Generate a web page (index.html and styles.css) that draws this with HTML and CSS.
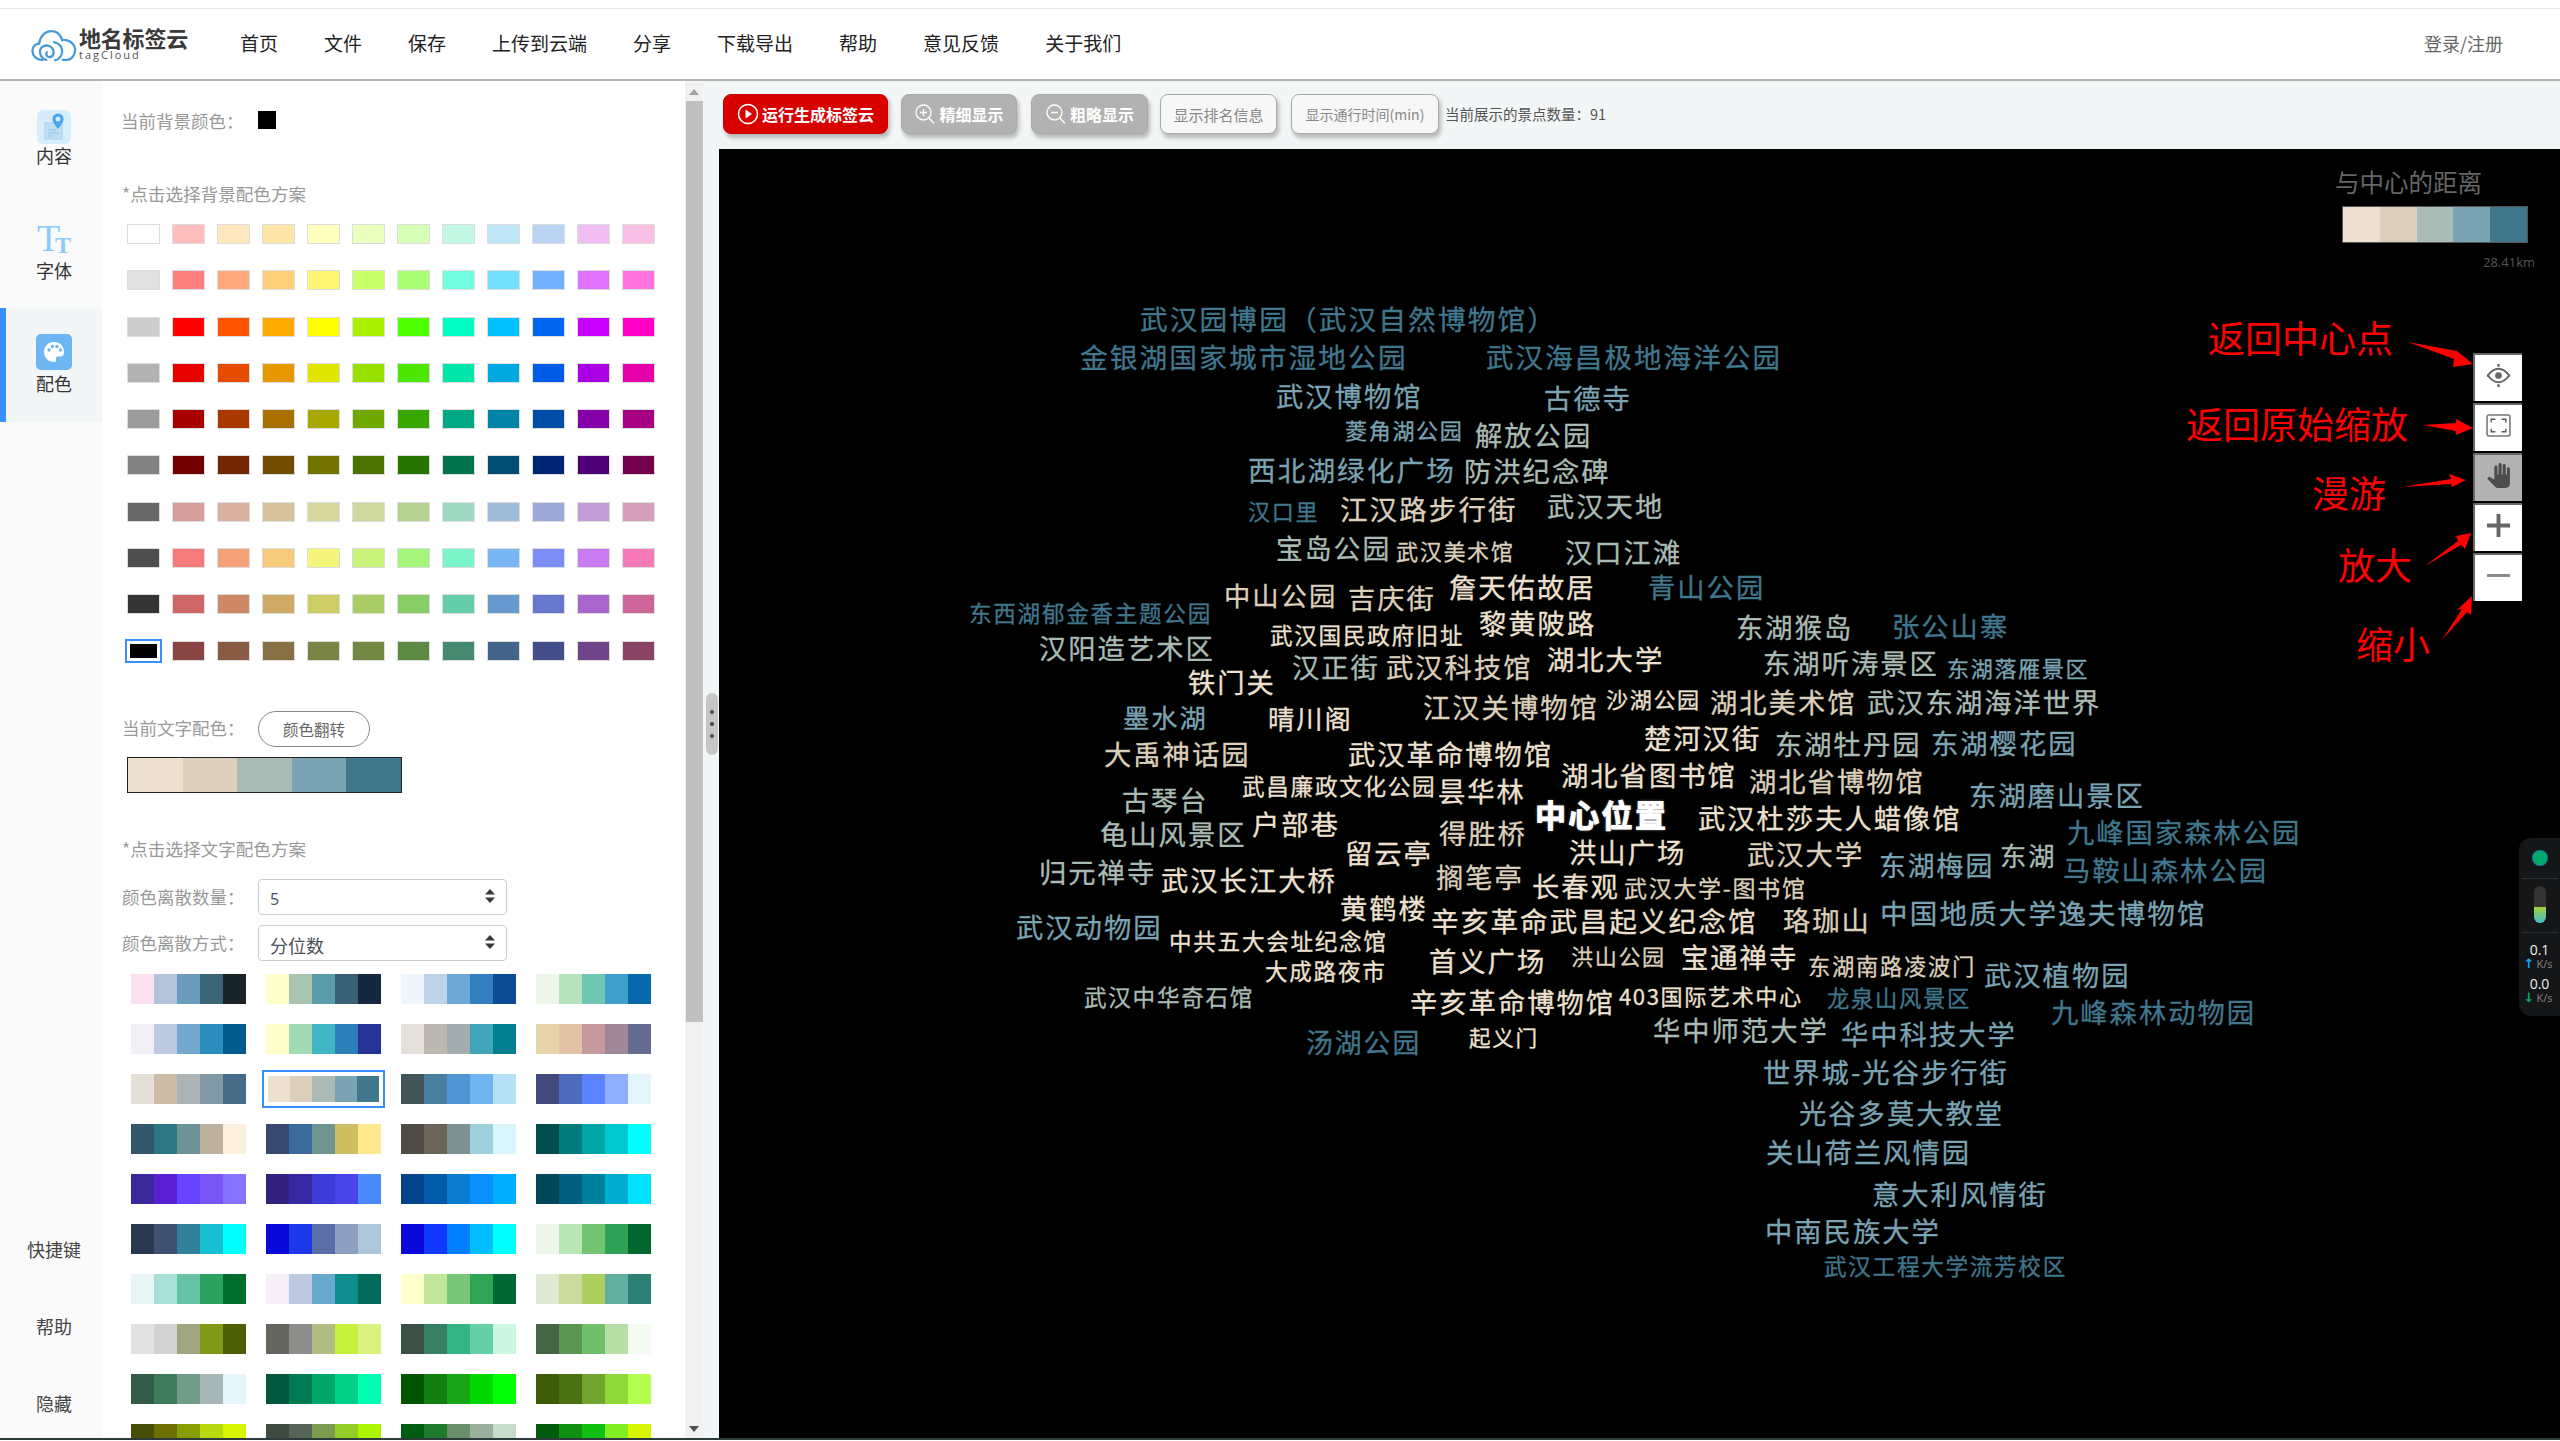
FILE: index.html
```html
<!DOCTYPE html>
<html lang="zh-CN">
<head>
  <meta charset="UTF-8" />
  <title>地名标签云 tagCloud</title>
  <link rel="stylesheet" href="styles.css">
</head>
<body>

<div class="topstrip"></div>

<header class="header">
  <div class="logo">
    <svg class="logo-icon" viewBox="0 0 48 34" fill="none" stroke="#4a9ad6" stroke-width="2.400" stroke-linecap="round">
      <path d="M12 32C5 32 1.500 27 1.500 22.500C1.500 18 5 15 8.500 15C9.500 7 15 2 21 2C27 2 31 6 32.500 11.500C38 10 45 14 46 20.500C46.500 26 43 32 37 32H33"/>
      <path d="M16 32C11 31 8.500 26 9.500 22C10.500 18 15 16 19 17.500C25 20 25 28 20 29C17 29.500 15 26 16.500 24"/>
      <path d="M24 13.500C30 14.500 33 19 32.500 24C32 28 29 32 25 32.500"/>
    </svg>
    <div class="logo-text">
      <div class="logo-name">地名标签云</div>
      <div class="logo-sub">tagCloud</div>
    </div>
  </div>
  <nav class="nav">
    <a>首页</a><a>文件</a><a>保存</a><a>上传到云端</a><a>分享</a><a>下载导出</a><a>帮助</a><a>意见反馈</a><a>关于我们</a>
  </nav>
  <div class="login">登录/注册</div>
</header>

<div class="main">
  <aside class="sidebar">
    <div class="side-item side-first">
      <svg class="side-icon" viewBox="0 0 34 34">
        <rect width="34" height="34" rx="6" fill="#d6eefb"/>
        <rect x="8" y="13" width="17" height="16" fill="#bfe0f5" stroke="#9fd0ee"/>
        <path d="M11 20h8M11 23h11M11 26h6" stroke="#8fc6ea" stroke-width="1"/>
        <path d="M21 19C17 14 15.500 11.500 15.500 9A5.500 5.500 0 0 1 26.500 9C26.500 11.500 25 14 21 19Z" fill="#4aa3f0"/>
        <circle cx="21" cy="9" r="2.500" fill="#d6eefb"/>
      </svg>
      <span>内容</span>
    </div>
    <div class="side-item side-font">
      <div class="tt"><span class="tt-big">T</span><span class="tt-small">T</span></div>
      <span>字体</span>
    </div>
    <div class="side-item side-active">
      <svg class="side-icon" viewBox="0 0 36 36">
        <rect width="36" height="36" rx="5" fill="#6cb6f3"/>
        <path d="M18 8C11.500 8 8 13 8 18C8 24 13 28 18 28C20 28 20.500 26.500 20 25.200C19.500 23.500 20.500 22.500 22 22.500H24.500C27 22.500 28 20.500 28 18C28 12 24 8 18 8Z" fill="#fff"/>
        <circle cx="13" cy="16" r="1.700" fill="#6cb6f3"/>
        <circle cx="16.500" cy="12.500" r="1.700" fill="#6cb6f3"/>
        <circle cx="21" cy="12.500" r="1.700" fill="#6cb6f3"/>
        <circle cx="24.500" cy="16" r="1.700" fill="#6cb6f3"/>
      </svg>
      <span>配色</span>
    </div>
    <div class="side-bottom">
      <div class="side-link">快捷键</div>
      <div class="side-link">帮助</div>
      <div class="side-link">隐藏</div>
    </div>
  </aside>

  <section class="panel">
    <div class="row-bg">
      <span class="label">当前背景颜色：</span>
      <span class="bg-current"></span>
    </div>
    <div class="title title-bg">*点击选择背景配色方案</div>
    <div class="swatches" id="swatches"></div>

    <div class="row-text">
      <span class="label label-fixed label-up">当前文字配色：</span>
      <button class="flip">颜色翻转</button>
    </div>
    <div class="strip current-strip" id="currentStrip"></div>

    <div class="title title-text">*点击选择文字配色方案</div>
    <div class="row-select">
      <span class="label label-fixed">颜色离散数量：</span>
      <div class="select select-num">5
        <svg class="select-arrow" viewBox="0 0 10 14"><path d="M5 0L10 5.500H0ZM5 14L0 8.500H10Z" fill="#343a40"/></svg>
      </div>
    </div>
    <div class="row-select row-select2">
      <span class="label label-fixed">颜色离散方式：</span>
      <div class="select">分位数
        <svg class="select-arrow" viewBox="0 0 10 14"><path d="M5 0L10 5.500H0ZM5 14L0 8.500H10Z" fill="#343a40"/></svg>
      </div>
    </div>
    <div class="palettes" id="palettes"></div>
  </section>

  <div class="vbar">
    <div class="vbar-up"></div>
    <div class="vbar-thumb"></div>
    <div class="vbar-down"></div>
  </div>

  <section class="work">
    <div class="toolbar">
      <button class="btn btn-run">
        <svg class="btn-icon" viewBox="0 0 22 22" fill="none" stroke="#fff" stroke-width="1.600"><circle cx="11" cy="11" r="9.500"/><path d="M8.500 6.500L15 11L8.500 15.500Z" fill="#fff" stroke="none"/></svg>
        运行生成标签云
      </button>
      <button class="btn btn-gray btn-fine">
        <svg class="btn-icon" viewBox="0 0 22 22" fill="none" stroke="#fff" stroke-width="1.300"><circle cx="9.500" cy="9.500" r="7.500"/><path d="M15 15L20 20.500M6 9.500H13M9.500 6V13"/></svg>
        精细显示
      </button>
      <button class="btn btn-gray btn-coarse">
        <svg class="btn-icon" viewBox="0 0 22 22" fill="none" stroke="#fff" stroke-width="1.300"><circle cx="9.500" cy="9.500" r="7.500"/><path d="M15 15L20 20.500M6 9.500H13"/></svg>
        粗略显示
      </button>
      <button class="btn btn-line btn-rank">显示排名信息</button>
      <button class="btn btn-line btn-time">显示通行时间(min)</button>
      <span class="count">当前展示的景点数量：91</span>
    </div>

    <div class="stage">
      <div class="split">
        <div class="split-handle"><i></i><i></i><i></i></div>
      </div>

      <div class="canvas" id="canvas">
        <div class="legend">
          <div class="legend-title">与中心的距离</div>
          <div class="strip legend-strip" id="legendStrip"></div>
          <div class="legend-km">28.41km</div>
        </div>

        <span class="note note-center">返回中心点</span>
        <span class="note note-reset">返回原始缩放</span>
        <span class="note note-pan">漫游</span>
        <span class="note note-in">放大</span>
        <span class="note note-out">缩小</span>

        <svg class="arrows" viewBox="719 149 1841 1289">
          <polygon points="2408,342 2457,351 2473,364 2453,367 2454,359"/>
          <polygon points="2423,425 2456,423 2456,419 2473,428 2456,435 2456,431"/>
          <polygon points="2402,487 2451,479 2449,474 2466,480 2452,487 2451,484"/>
          <polygon points="2425,566 2458,541 2456,536 2471,533 2465,549 2461,545"/>
          <polygon points="2442,640 2462,609 2457,610 2472,596 2471,615 2467,612"/>
        </svg>

        <div class="zoomctl">
          <div class="zoombtn">
            <svg viewBox="0 0 26 26" fill="none" stroke="#666"><path d="M2 13C6 7.500 9 6 13 6C17 6 20 7.500 24 13C20 18.500 17 20 13 20C9 20 6 18.500 2 13Z" stroke-width="2"/><circle cx="13" cy="13" r="3.500" fill="#666" stroke="none"/><path d="M13 1V4M13 22V25M1 13H3M23 13H25" stroke-width="2.500"/></svg>
          </div>
          <div class="zoombtn">
            <svg viewBox="0 0 24 22" fill="none" stroke="#777"><rect x="1" y="1" width="22" height="20" rx="2" stroke-width="1.500"/><path d="M5 8V5H9M15 5H19V8M5 14V17H9M15 17H19V14" stroke="#555" stroke-width="1.300"/></svg>
          </div>
          <div class="zoombtn zoombtn-on">
            <svg viewBox="0 0 24 24"><path d="M23 5.500V20c0 2.200-1.800 4-4 4h-7.300c-1.080 0-2.100-.43-2.850-1.190L1 14.830s1.260-1.230 1.300-1.250c.22-.19.490-.29.790-.29.220 0 .420.060.600.160.040.010 4.310 2.460 4.310 2.460V4c0-.83.670-1.500 1.500-1.500S11 3.170 11 4v7h1V1.500c0-.83.670-1.500 1.500-1.500S15 .67 15 1.500V11h1V2.500c0-.83.670-1.500 1.500-1.500s1.500.67 1.500 1.500V11h1V5.500c0-.83.670-1.500 1.500-1.500s1.500.67 1.500 1.500z" fill="#4d4d4d"/></svg>
          </div>
          <div class="zoombtn">
            <svg viewBox="0 0 26 26" stroke="#666" stroke-width="4"><path d="M1 13H25M13 1V25"/></svg>
          </div>
          <div class="zoombtn">
            <svg viewBox="0 0 26 26" stroke="#888" stroke-width="3"><path d="M1 13H25"/></svg>
          </div>
        </div>

        <div class="netwidget">
          <div class="net-dot"></div>
          <div class="net-line"></div>
          <div class="net-pill"><div class="net-fill"></div></div>
          <div class="net-line"></div>
          <div class="net-num">0.1</div>
          <div class="net-unit"><i class="up">↑</i>K/s</div>
          <div class="net-num net-num2">0.0</div>
          <div class="net-unit"><i class="down">↓</i>K/s</div>
        </div>
      </div>
    </div>
  </section>
</div>

<div class="endline"></div>

<script src="app.js"></script>
</body>
</html>
```

FILE: styles.css
```css
* {
  box-sizing: border-box;
}
html, body {
  margin: 0;
  height: 1441px;
  overflow: hidden;
  background: #fff;
}
body {
  font-family: "Noto Sans CJK SC", "Noto Sans", sans-serif;
  color: #333;
}
button {
  font-family: inherit;
  padding: 0;
}

.topstrip {
  height: 9px;
  border-bottom: 1px solid #e6e6e6;
}

/* header */
.header {
  height: 72px;
  border-bottom: 2px solid #b4b4b4;
  display: flex;
  align-items: center;
  padding-left: 31px;
  background: #fff;
}
.logo {
  display: flex;
  align-items: center;
  gap: 2px;
  width: 209px;
}
.logo-icon {
  width: 46px;
  height: 33px;
  margin-top: 3px;
}
.logo-text {
  line-height: 1;
}
.logo-name {
  font-size: 22px;
  font-weight: 700;
  color: #3a3a3a;
  letter-spacing: -.2px;
  margin-top: -3px;
}
.logo-sub {
  font-family: "Open Sans", sans-serif;
  font-size: 11px;
  letter-spacing: 2px;
  color: #555;
  margin-top: 1px;
}
.nav {
  display: flex;
  gap: 46px;
  font-size: 19px;
  color: #222;
  margin-top: -3px;
}
.login {
  margin-left: auto;
  margin-right: 57px;
  font-size: 18px;
  color: #666;
  margin-top: -3px;
}

.main {
  display: flex;
  height: 1357px;
}
.endline {
  height: 2px;
  background: #2c3a3c;
}

/* left icon column */
.sidebar {
  width: 102px;
  background: #fafafa;
  display: flex;
  flex-direction: column;
  flex: none;
}
.side-item {
  height: 114px;
  display: flex;
  flex-direction: column;
  align-items: center;
  padding: 29px 0 0 6px;
  font-size: 18px;
  line-height: 26px;
  color: #333;
}
.side-first {
  height: 113px;
}
.side-first .side-icon {
  margin-bottom: -2px;
}
.side-icon {
  width: 34px;
  height: 34px;
}
.side-font {
  padding-top: 27px;
}
.tt {
  height: 36px;
  display: flex;
  align-items: flex-end;
  font-family: "Liberation Serif", serif;
  font-weight: 700;
  color: #8ccafb;
  line-height: 1;
}
.tt-big {
  font-size: 38px;
  font-weight: 400;
  margin-right: -5px;
}
.tt-small {
  font-size: 24px;
}
.side-active {
  background: #f3f6f6;
  border-left: 6px solid #3a8ffe;
  padding-left: 0;
  padding-top: 26px;
}
.side-active .side-icon {
  width: 36px;
  height: 36px;
}
.side-bottom {
  margin-top: auto;
  margin-bottom: -3px;
}
.side-link {
  height: 77px;
  display: flex;
  align-items: center;
  justify-content: center;
  padding-left: 6px;
  font-size: 18px;
  color: #444;
}

/* colour panel */
.panel {
  width: 583px;
  flex: none;
  padding: 29px 0 0 20px;
  overflow: hidden;
  background: #fff;
}
.label {
  font-size: 17.500px;
  color: #999;
  white-space: nowrap;
}
.label-fixed {
  width: 136px;
  flex: none;
}
.label-up {
  margin-top: -3px;
}
.row-bg {
  display: flex;
  align-items: center;
  height: 24px;
}
.row-bg .label {
  margin: -3px 0 0 -1px;
}
.bg-current {
  width: 18px;
  height: 18px;
  background: #000;
  margin: -4px 0 0 14px;
}
.title {
  height: 24px;
  line-height: 24px;
  font-size: 17.600px;
  color: #999;
}
.title-bg {
  margin-top: 48px;
}
.title-text {
  margin-top: 44px;
}
.swatches {
  display: grid;
  grid-template-columns: repeat(12, 33px);
  grid-auto-rows: 20px;
  column-gap: 12px;
  row-gap: 26.300px;
  margin: 18px 0 0 5px;
}
.swatch {
  border: 1px solid #ddd;
}
.swatch-on {
  border: 3px solid #fff;
  outline: 2px solid #3a8ffe;
}
.row-text {
  display: flex;
  align-items: center;
  margin-top: 50px;
}
.flip {
  width: 112px;
  height: 36px;
  border: 1px solid #888;
  border-radius: 18px;
  background: #fff;
  font-size: 15.500px;
  color: #666;
}
.strip {
  display: flex;
}
.strip span {
  flex: 1;
}
.current-strip {
  width: 275px;
  height: 36px;
  border: 1px solid #222;
  margin: 10px 0 0 5px;
}
.row-select {
  display: flex;
  align-items: center;
  margin-top: 18px;
}
.row-select2 {
  margin-top: 10px;
}
.select {
  position: relative;
  width: 249px;
  height: 36px;
  border: 1px solid #ccc;
  border-radius: 4px;
  padding-left: 11px;
  font-size: 18px;
  line-height: 38px;
  color: #495057;
}
.select-num {
  font-family: "Open Sans", sans-serif;
  font-size: 16px;
}
.select-arrow {
  position: absolute;
  right: 11px;
  top: 9px;
  width: 10px;
  height: 14px;
}
.palettes {
  display: grid;
  grid-template-columns: repeat(4, 115px);
  grid-auto-rows: 30px;
  column-gap: 20px;
  row-gap: 20px;
  margin: 13px 0 0 9px;
}
.palette-on {
  padding: 2px;
  background: #fff;
  outline: 2px solid #3a8ffe;
  outline-offset: 2px;
}

/* fake scrollbar */
.vbar {
  width: 18px;
  flex: none;
  background: #f1f1f1;
  display: flex;
  flex-direction: column;
  align-items: center;
}
.vbar-up {
  margin: 8px 0 6px;
  border: 5px solid transparent;
  border-top: none;
  border-bottom: 6px solid #a3a3a3;
}
.vbar-thumb {
  width: 17px;
  height: 921px;
  background: #c0c0c0;
}
.vbar-down {
  margin-top: auto;
  margin-bottom: 6px;
  border: 5px solid transparent;
  border-bottom: none;
  border-top: 6px solid #505050;
}

/* right side */
.work {
  flex: 1;
  background: #f3f6f6;
  display: flex;
  flex-direction: column;
  min-width: 0;
}
.toolbar {
  height: 68px;
  flex: none;
  padding: 13px 0 0 20px;
  display: flex;
  align-items: flex-start;
}
.btn {
  height: 40px;
  border-radius: 8px;
  display: flex;
  align-items: center;
  justify-content: center;
  gap: 3px;
  font-size: 16px;
  white-space: nowrap;
  box-shadow: 2px 4px 4px rgba(0,0,0,.25);
}
.btn-icon {
  width: 22px;
  height: 22px;
  flex: none;
}
.btn-run {
  width: 165px;
  background: #d90000;
  border: 1px solid #c90000;
  color: #fff;
  font-weight: 700;
  margin-right: 13px;
}
.btn-gray {
  width: 116px;
  background: #b2b2b2;
  border: 1px solid #a8a8a8;
  color: #fff;
  font-weight: 700;
}
.btn-fine {
  margin-right: 14px;
}
.btn-coarse {
  width: 117px;
  margin-right: 12px;
}
.btn-line {
  background: #f7f7f7;
  border: 1px solid #aaa;
  color: #888;
  font-size: 15px;
}
.btn-rank {
  width: 117px;
  margin-right: 14px;
}
.btn-time {
  width: 148px;
  font-size: 14px;
  margin-right: 6px;
}
.count {
  font-size: 14.500px;
  line-height: 40px;
  color: #555;
  white-space: nowrap;
}
.stage {
  flex: 1;
  display: flex;
  min-height: 0;
}
.split {
  width: 16px;
  flex: none;
}
.split-handle {
  width: 12px;
  height: 62px;
  margin: 544px 0 0 3px;
  background: #c6c6c6;
  border-radius: 6px;
  display: flex;
  flex-direction: column;
  align-items: center;
  justify-content: center;
  gap: 8px;
}
.split-handle i {
  width: 4px;
  height: 4px;
  border-radius: 50%;
  background: #444;
}

/* map canvas */
.canvas {
  flex: 1;
  position: relative;
  background: #000;
  overflow: hidden;
}
.word {
  position: absolute;
  transform: translateY(-50%);
  line-height: 1;
  white-space: nowrap;
  -webkit-text-stroke: .3px currentColor;
}
.word-center {
  font-weight: 700;
  -webkit-text-stroke: 1px #fff;
  text-shadow: 0 0 3px #999;
}
.legend {
  position: absolute;
  left: 1616px;
  top: 21px;
  width: 200px;
}
.legend-title {
  font-size: 24.500px;
  line-height: 24px;
  color: #666;
  white-space: nowrap;
}
.legend-strip {
  width: 186px;
  height: 37px;
  margin: 12px 0 0 7px;
  border: 1px solid #555;
}
.legend-km {
  margin-top: 10px;
  font-family: "Open Sans", sans-serif;
  font-size: 13px;
  line-height: 18px;
  color: #555;
  text-align: right;
}
.note {
  position: absolute;
  font-size: 37px;
  line-height: 1;
  color: #f00;
  white-space: nowrap;
  transform: translateY(-50%);
}
.note-center { left: 1489px; top: 188px; }
.note-reset { left: 1467px; top: 274px; }
.note-pan { left: 1593px; top: 343px; }
.note-in { left: 1619px; top: 415px; }
.note-out { left: 1637px; top: 494px; }
.arrows {
  position: absolute;
  inset: 0;
  width: 100%;
  height: 100%;
  fill: #f00;
  pointer-events: none;
}
.zoomctl {
  position: absolute;
  right: 38px;
  top: 204px;
  display: flex;
  flex-direction: column;
  gap: 2px;
}
.zoombtn {
  width: 49px;
  height: 48px;
  background: #fff;
  border-top: 2px solid #666;
  border-left: 2px solid #666;
  display: flex;
  align-items: center;
  justify-content: center;
}
.zoombtn svg {
  width: 25px;
  height: 25px;
  margin-bottom: 6px;
}
.zoombtn-on {
  background: #b2b2b2;
}
.netwidget {
  position: absolute;
  right: 0;
  top: 689px;
  width: 41px;
  height: 178px;
  background: #141618;
  border-radius: 12px 0 0 12px;
  display: flex;
  flex-direction: column;
  align-items: center;
  padding-top: 13px;
}
.net-dot {
  width: 14px;
  height: 14px;
  border-radius: 50%;
  background: #00a96d;
  box-shadow: 0 0 0 1px #1c7fa0;
}
.net-line {
  width: 36px;
  height: 1px;
  background: #2c2e30;
  margin-top: 13px;
}
.net-pill {
  width: 12px;
  height: 37px;
  margin-top: 7px;
  margin-bottom: -4px;
  background: #333;
  border-radius: 6px;
  overflow: hidden;
  display: flex;
  align-items: flex-end;
}
.net-fill {
  width: 100%;
  height: 16px;
  background: linear-gradient(#a4d133, #3fbdd0);
}
.net-num {
  font-family: "Open Sans", sans-serif;
  font-size: 14px;
  line-height: 14px;
  color: #eee;
  margin-top: 10px;
}
.net-num2 {
  margin-top: 7px;
}
.net-unit {
  font-family: "Open Sans", sans-serif;
  font-size: 11px;
  line-height: 13px;
  color: #888;
  white-space: nowrap;
  display: flex;
  align-items: center;
  margin-left: -3px;
}
.net-unit i {
  font-family: "DejaVu Sans", sans-serif;
  font-size: 13px;
  font-style: normal;
  font-weight: 700;
  margin-right: 2px;
}
.net-unit .up {
  color: #12a8f0;
}
.net-unit .down {
  color: #0aa868;
}
```

FILE: app.js
```js
// background colour table
var bgRows = [
  "ffffff ffbebe ffe8c0 ffe6a8 ffffbe e9ffbe d8ffb8 c4f8e4 bee4f8 bad3f2 f0bef2 f8c0e4",
  "e1e1e1 ff7f7f ffa77f ffd07a fff573 c8ff66 a8ff73 73ffdf 73dfff 73b2ff df73ff ff73df",
  "cccccc ff0000 ff5500 ffaa00 ffff00 aaf000 4dff00 00ffc5 00c0ff 0066f0 c800ff ff00c5",
  "b2b2b2 e60000 e64c00 e69800 e0e600 98e000 4ce600 00e6a9 00a9e0 005ce6 a900e6 e600a9",
  "9c9c9c a80000 a83800 a87000 a8a800 70a800 38a800 00a884 0084a8 004da8 8400a8 a80084",
  "828282 730000 732600 734c00 737300 4c7300 267300 00734c 004c73 002673 4c0073 73004c",
  "686868 d79e9e d7b09e d7c29e d7d79e cdd79e b5d090 9ed7c2 9ebbd7 9eaad7 c29ed7 d69dbc",
  "4e4e4e f57a7a f5a27a f5ca7a f5f57a caf57a a5f57a 7af5ca 7ab6f5 7a8ef5 ca7af5 f57ab6",
  "343434 cd6666 cd8966 cdaa66 cdcd66 aacd66 89cd66 66cdab 6699cd 6677cd aa66cd cd6699",
  "000000 894444 895a44 897044 7a8444 728944 5c8944 448970 44658a 444f89 704489 894465"
];

// text colour schemes, 4 in each row
var schemes = [
  "fde0ef b3c3d9 6a9cbd 3b6477 1a2427", "ffffcc a9c4b0 599da8 3a6075 142840", "eff6fb bcd3e8 6ea9d8 317fbe 0d4a96", "eef8ea b6e2bc 70c7b4 3f9fca 0868ac",
  "f1eef6 bdc9e1 74a9cf 2b8cbe 045a8d", "ffffcc a1dab4 41b6c4 2c7fb8 253494", "e5e1da bdb9b0 a2adb0 40a5b8 007f91", "e6d3aa e3c3a8 c49a9f a08899 646c90",
  "e3e0d8 ccbba5 adb4b6 8199a6 476c87", "ede0d0 dccfbc a9bbb4 7aa3b3 40778d", "425558 4a7fa0 5096d4 70b5f0 b5e0f5", "424b7c 4e6cbc 5b82ff 90adff e3f4fb",
  "33566a 2c7686 6e9295 bcb19e fbf0dd", "38486e 3c6a9d 6f9590 cfbf62 ffe88e", "4e4b44 6a6558 7e9294 9ecfdc d8f7fa", "014d4e 007c7c 00a5a5 00c8d0 00ffff",
  "3c279c 5a1fd0 6643ff 7a55f5 8773ff", "33217f 3627a3 3c3cd6 4844e8 4a8aff", "03438a 015ba8 0b7dd0 0a8fff 00aeff", "01475a 005f7e 00809f 00acd0 00e0ff",
  "283850 3f5070 327f9c 17bfd0 00ffff", "0808d8 1c38e8 5c6ea8 8f9fbf aec6dc", "0808d8 1038ff 0080ff 00bfff 00ffff", "eff6ea b8e6b4 72c372 30a258 00682e",
  "e8f6f6 a8e0d8 66c2a4 2ca25f 006d2c", "f6eff7 bdc9e1 67a9cf 0f8d8d 016c59", "ffffcc c2e699 78c679 31a354 006837", "e0e9d4 cbdb9d add160 62aea0 2c7f75",
  "e3e2e0 d2d2d2 a0a580 809a15 4e5e05", "656560 8f8c8c b1bd82 c5f03c d9f27e", "3b5148 378066 33b585 66d0a8 ccf7e0", "456644 5c9654 70c06b b6e0a8 f4fcf2",
  "305c48 3f7c5c 729b88 a9b6b8 e6f5fb", "00573d 007a52 00a568 00d088 00ffb2", "005500 118011 16a616 00d800 00ff00", "3f5a08 4c7112 72a530 90d83a b2ff50",
  "474e08 6b7000 889e00 b8d810 d8f500", "3f4a40 566456 7c9a50 94cc28 aaf500", "005c12 1f7a30 6a8f6c 9caf9c c8dccc", "005c0c 109010 10c010 80ee20 d8f500"
];

var SELECTED_SCHEME = 9;
var ramp = schemes[SELECTED_SCHEME].split(" ").map(function (c) { return "#" + c; });

// text, left, vertical middle (page px), char pitch, colour index in ramp
var words = [
  ["武汉园博园（武汉自然博物馆）", 1140, 320, 29.5, 4],
  ["金银湖国家城市湿地公园", 1080, 358, 29.5, 4],
  ["武汉海昌极地海洋公园", 1486, 358, 29.3, 4],
  ["武汉博物馆", 1276, 397, 29, 3],
  ["古德寺", 1544, 399, 29, 3],
  ["菱角湖公园", 1345, 430, 23.5, 3],
  ["解放公园", 1475, 436, 29, 2],
  ["西北湖绿化广场", 1248, 471, 29.4, 3],
  ["防洪纪念碑", 1464, 472, 29, 2],
  ["汉口里", 1248, 511, 23.5, 4],
  ["江汉路步行街", 1340, 510, 29.3, 1],
  ["武汉天地", 1547, 507, 29, 2],
  ["宝岛公园", 1276, 549, 28.5, 2],
  ["武汉美术馆", 1396, 551, 23.5, 1],
  ["汉口江滩", 1565, 553, 29, 2],
  ["中山公园", 1224, 596, 28, 1],
  ["吉庆街", 1348, 599, 29, 1],
  ["詹天佑故居", 1449, 588, 29, 0],
  ["青山公园", 1648, 588, 29, 4],
  ["东西湖郁金香主题公园", 969, 614, 24, 4],
  ["武汉国民政府旧址", 1270, 636, 24, 0],
  ["黎黄陂路", 1479, 624, 29, 0],
  ["汉阳造艺术区", 1039, 649, 29, 2],
  ["汉正街", 1292, 668, 29, 2],
  ["武汉科技馆", 1386, 668, 29, 1],
  ["湖北大学", 1547, 660, 29, 0],
  ["铁门关", 1188, 683, 29, 0],
  ["江汉关博物馆", 1423, 708, 29, 1],
  ["沙湖公园", 1606, 699, 23.5, 0],
  ["墨水湖", 1123, 718, 28, 3],
  ["晴川阁", 1268, 719, 28, 0],
  ["湖北美术馆", 1710, 703, 29, 1],
  ["武汉东湖海洋世界", 1867, 703, 29, 2],
  ["东湖猴岛", 1736, 628, 29, 2],
  ["张公山寨", 1892, 627, 29, 4],
  ["东湖听涛景区", 1763, 664, 29, 2],
  ["东湖落雁景区", 1947, 668, 23.5, 3],
  ["楚河汉街", 1644, 739, 29, 0],
  ["东湖牡丹园", 1775, 745, 29, 2],
  ["东湖樱花园", 1931, 744, 29, 3],
  ["大禹神话园", 1104, 755, 29, 1],
  ["武汉革命博物馆", 1348, 755, 29, 0],
  ["湖北省图书馆", 1561, 776, 29, 0],
  ["湖北省博物馆", 1749, 782, 29, 1],
  ["东湖磨山景区", 1969, 796, 29, 3],
  ["九峰国家森林公园", 2067, 833, 29, 4],
  ["武汉杜莎夫人蜡像馆", 1698, 819, 29, 0],
  ["洪山广场", 1569, 853, 29, 0],
  ["武汉大学", 1747, 855, 29, 1],
  ["东湖梅园", 1879, 866, 28.5, 3],
  ["东湖", 2000, 856, 28, 2],
  ["马鞍山森林公园", 2063, 871, 29, 4],
  ["长春观", 1532, 887, 29, 0],
  ["武汉大学-图书馆", 1624, 888, 24.5, 1],
  ["中国地质大学逸夫博物馆", 1880, 914, 29.4, 3],
  ["辛亥革命武昌起义纪念馆", 1431, 922, 29.4, 0],
  ["珞珈山", 1783, 921, 29, 1],
  ["洪山公园", 1571, 956, 23.5, 1],
  ["宝通禅寺", 1681, 958, 29, 0],
  ["东湖南路凌波门", 1808, 966, 23.7, 1],
  ["武汉植物园", 1984, 976, 29, 3],
  ["九峰森林动物园", 2051, 1013, 29, 4],
  ["403国际艺术中心", 1619, 996, 23.5, 0],
  ["龙泉山风景区", 1827, 998, 23.7, 4],
  ["华中师范大学", 1653, 1031, 29, 2],
  ["华中科技大学", 1841, 1035, 29, 3],
  ["世界城-光谷步行街", 1763, 1073, 29, 3],
  ["光谷多莫大教堂", 1799, 1114, 29, 3],
  ["关山荷兰风情园", 1766, 1153, 29, 3],
  ["意大利风情街", 1872, 1195, 29, 3],
  ["中南民族大学", 1765, 1232, 29, 3],
  ["武汉工程大学流芳校区", 1824, 1267, 24, 4],
  ["古琴台", 1122, 801, 28.5, 2],
  ["武昌廉政文化公园", 1242, 787, 24, 0],
  ["昙华林", 1438, 792, 29, 0],
  ["龟山风景区", 1100, 835, 29, 2],
  ["户部巷", 1252, 825, 29, 0],
  ["得胜桥", 1439, 834, 29, 1],
  ["留云亭", 1345, 854, 29, 0],
  ["归元禅寺", 1039, 873, 29, 2],
  ["武汉长江大桥", 1161, 881, 29, 0],
  ["搁笔亭", 1436, 878, 29, 1],
  ["黄鹤楼", 1340, 909, 29, 0],
  ["武汉动物园", 1016, 928, 29, 3],
  ["中共五大会址纪念馆", 1169, 942, 24, 0],
  ["首义广场", 1429, 962, 29, 0],
  ["大成路夜市", 1265, 972, 24, 0],
  ["武汉中华奇石馆", 1084, 998, 24, 2],
  ["辛亥革命博物馆", 1410, 1003, 29, 0],
  ["汤湖公园", 1306, 1043, 28.5, 4],
  ["起义门", 1469, 1038, 23, 0]
];

function fillStrip(el, colors) {
  colors.forEach(function (c) {
    var seg = document.createElement("span");
    seg.style.background = c;
    el.appendChild(seg);
  });
}

function buildSwatches() {
  var box = document.getElementById("swatches");
  bgRows.forEach(function (row) {
    row.split(" ").forEach(function (c) {
      var s = document.createElement("div");
      s.className = "swatch" + (c === "000000" ? " swatch-on" : "");
      s.style.background = "#" + c;
      box.appendChild(s);
    });
  });
}

function buildPalettes() {
  var box = document.getElementById("palettes");
  schemes.forEach(function (scheme, i) {
    var wrap = document.createElement("div");
    wrap.className = i === SELECTED_SCHEME ? "palette-on" : "palette";
    var strip = document.createElement("div");
    strip.className = "strip";
    strip.style.height = "100%";
    fillStrip(strip, scheme.split(" ").map(function (c) { return "#" + c; }));
    wrap.appendChild(strip);
    box.appendChild(wrap);
  });
}

function placeWord(canvas, text, x, y, pitch, color, extra) {
  var w = document.createElement("span");
  w.className = "word" + (extra || "");
  w.textContent = text;
  w.style.left = (x - 719) + "px";
  w.style.top = (y - 150) + "px";
  w.style.fontSize = (pitch * 0.94).toFixed(1) + "px";
  w.style.letterSpacing = (pitch * 0.07).toFixed(1) + "px";
  w.style.color = color;
  canvas.appendChild(w);
}

function buildCloud() {
  var canvas = document.getElementById("canvas");
  words.forEach(function (w) {
    placeWord(canvas, w[0], w[1], w[2], w[3], ramp[w[4]]);
  });
  placeWord(canvas, "中心位置", 1535, 814, 33, "#fff", " word-center");
}

fillStrip(document.getElementById("currentStrip"), ramp);
fillStrip(document.getElementById("legendStrip"), ramp);
buildSwatches();
buildPalettes();
buildCloud();
```
